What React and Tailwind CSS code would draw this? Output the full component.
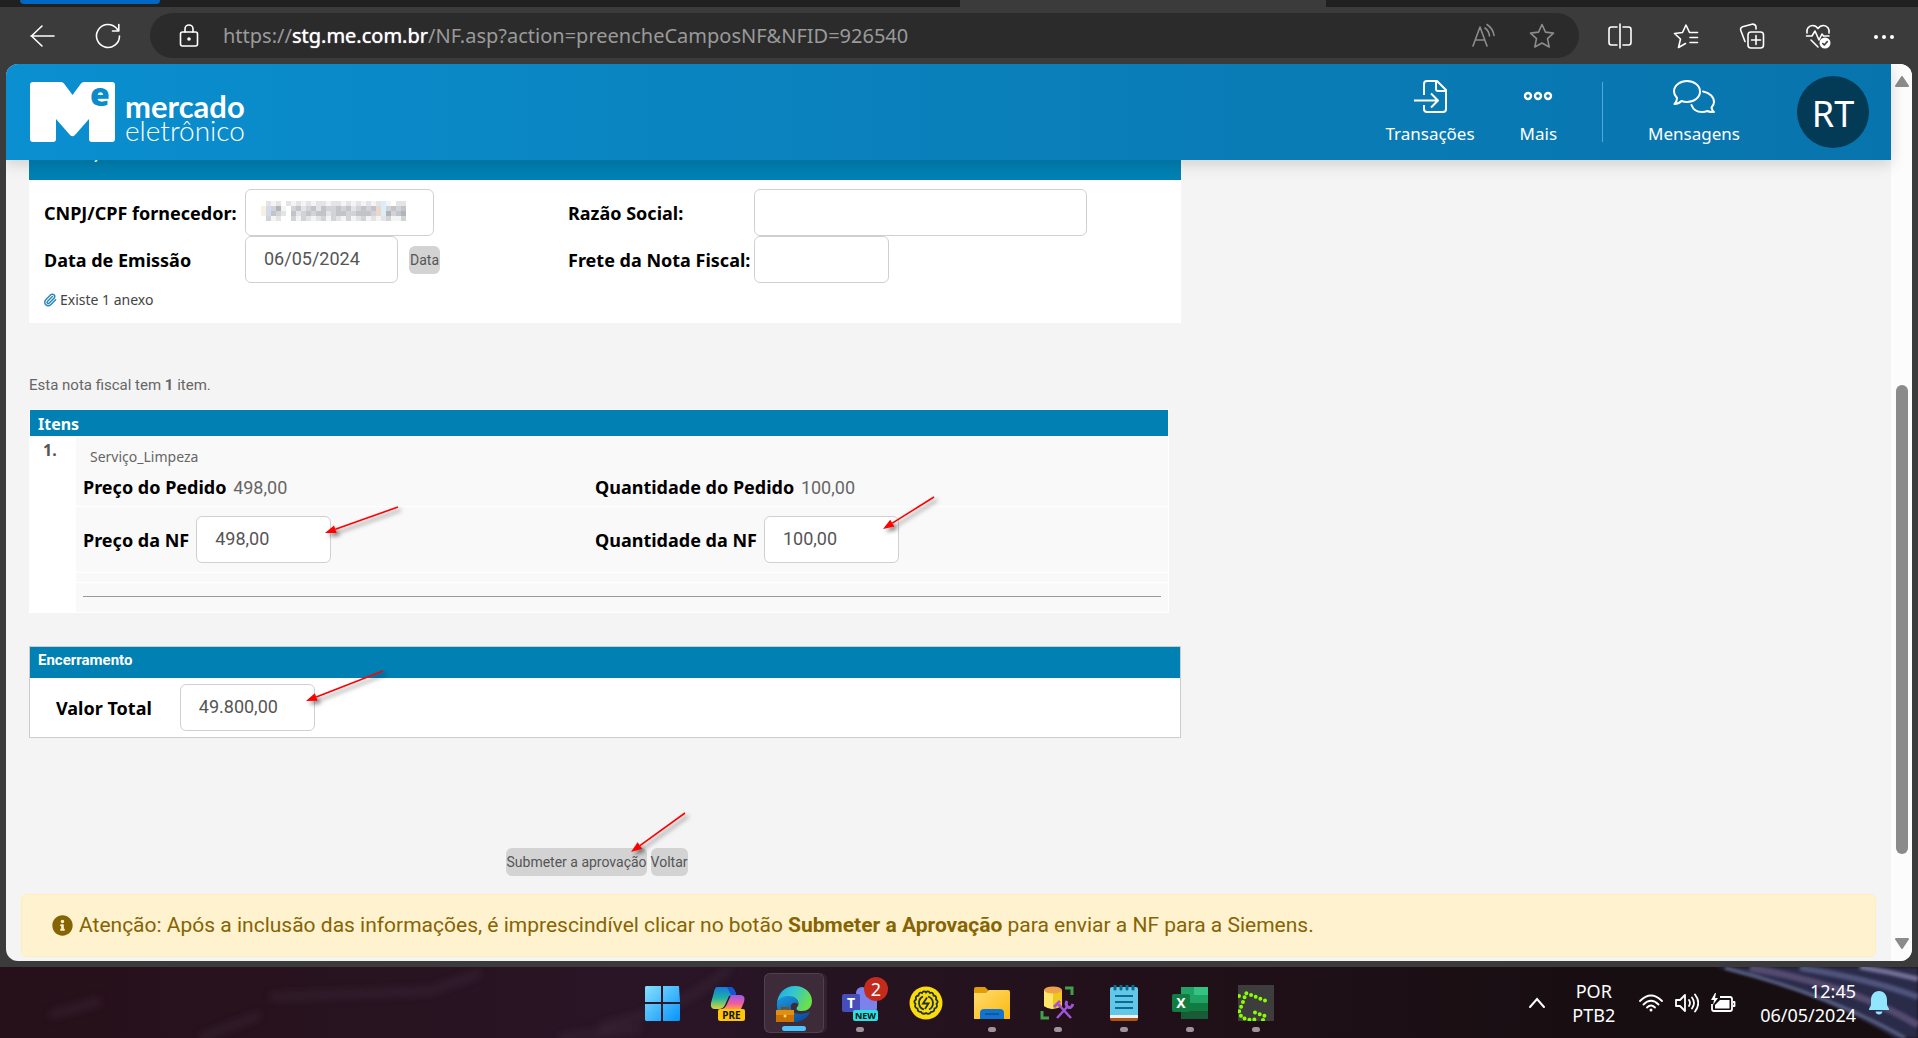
import { FaInfoCircle } from "react-icons/fa";
import { Paperclip } from "lucide-react";

const INPUT = "h-[47px] rounded-md border border-[#d0d0d0] bg-white px-[18px] pb-0.5 font-[Roboto,sans-serif] text-lg text-[#555]";
const LABEL = "font-['Noto_Sans',sans-serif] text-lg leading-5 font-bold text-black";
const BUTTON = "h-7 rounded-md bg-[#d3d3d3] font-[Roboto,sans-serif] text-sm text-[#555]";

// tail at the top right corner, tip at the bottom left corner
function Arrow({ width, height, className }) {
  const len = Math.hypot(width, height);
  const ux = width / len;
  const uy = -height / len;
  const bx = ux * 11;
  const by = height + uy * 11;
  const head = `0,${height} ${bx - uy * 4},${by + ux * 4} ${bx + uy * 4},${by - ux * 4}`;

  return (
    <svg
      width={width}
      height={height}
      aria-hidden="true"
      className={`pointer-events-none absolute z-10 overflow-visible drop-shadow-[3px_3px_2px_rgba(0,0,0,0.5)] ${className}`}
    >
      <line x1={width} y1="0" x2={bx} y2={by} stroke="#fe0000" strokeWidth="1.6" />
      <polygon points={head} fill="#fe0000" />
    </svg>
  );
}

const SHADES = {
  ".": "#ffffff",
  a: "#f4f4f4",
  b: "#e4e4e6",
  c: "#d2d3d7",
  d: "#c2c4c9",
  e: "#b0b4bb",
  p: "#fbeee3",
  s: "#d2dbe9",
  o: "#ecd8ca",
  l: "#dcedf9",
};

const MOSAIC = [
  ".bab.babababbabbababababla.bb",
  "pscea.cdbcdbdccdcdbcdcdolcdcd",
  "psdcb.dbcdcddbcddccdddcolecde",
  ".cab..cacbabcacbacabcabablaac".replace("l", "c"),
];

function Mosaic() {
  return (
    <svg width="145" height="20" viewBox="0 0 29 4" preserveAspectRatio="none" shapeRendering="crispEdges" aria-hidden="true" className="absolute top-3 left-4">
      {MOSAIC.map((row, y) => [...row].map((shade, x) => <rect key={`${x}-${y}`} x={x} y={y} width="1" height="1" fill={SHADES[shade]} />))}
    </svg>
  );
}

function Line({ children, size = 26, className = "" }) {
  return (
    <svg width={size} height={size} viewBox="0 0 26 26" fill="none" stroke="currentColor" strokeWidth="1.6" strokeLinecap="round" strokeLinejoin="round" aria-hidden="true" className={className}>
      {children}
    </svg>
  );
}

function ToolButton({ label, children }) {
  return (
    <button type="button" aria-label={label} className="flex h-11 w-[66px] items-center justify-center text-white">
      {children}
    </button>
  );
}

function BrowserBar() {
  return (
    <div className="font-['Noto_Sans',sans-serif]">
      <div className="flex h-[7px] bg-[#202020]">
        <div className="ml-5 h-1 w-[140px] rounded-b-xl bg-[#0068c4]" />
        <div className="ml-[800px] h-[7px] w-[366px] bg-[#3b3b3b]" />
      </div>
      <div className="flex h-[57px] items-center bg-[#3b3b3b] pr-px pl-[9px]">
        <ToolButton label="Voltar">
          <Line><path d="M25 13H2M13 3 2.500 13 13 23" /></Line>
        </ToolButton>
        <ToolButton label="Atualizar">
          <Line><path d="M24.500 13A11.500 11.500 0 1 1 21.500 5.200L23.500 7.800M23.800 1.500V8H17.500" /></Line>
        </ToolButton>
        <div className="ml-[9px] flex h-[45px] flex-1 items-center rounded-full bg-[#2b2b2b] pr-6 pl-[26px]">
          <Line className="text-white">
            <rect x="4.500" y="9" width="17" height="14" rx="2" />
            <path d="M9 9V6a4 4 0 0 1 8 0v3" />
            <circle cx="13" cy="16" r="1" fill="currentColor" />
          </Line>
          <div className="ml-[21px] flex-1 text-xl text-[#9a9a9a]">
            https://<span className="text-white [text-shadow:0_0_1px_#fff]">stg.me.com.br</span>/NF.asp?action=preencheCamposNF&amp;NFID=926540
          </div>
          <button type="button" aria-label="Ler em voz alta" className="mr-8 text-[#8c8c8c]">
            <Line><path d="M2 23 9 4l7 19M4.500 17h9M14 5q4 3 4.500 8M16 1.500q6 4 7 11" /></Line>
          </button>
          <button type="button" aria-label="Favoritar" className="text-[#8c8c8c]">
            <Line><path d="m13 1.500 3.500 7.600 8 1-6 5.600 1.700 8.300L13 20l-7.200 4 1.700-8.300-6-5.600 8-1z" /></Line>
          </button>
        </div>
        <div className="ml-2 flex">
          <ToolButton label="Dividir tela">
            <Line><path d="M10 4H4.500A2.500 2.500 0 0 0 2 6.500v13A2.500 2.500 0 0 0 4.500 22H10M16 4h5.500A2.500 2.500 0 0 1 24 6.500v13a2.500 2.500 0 0 1-2.500 2.500H16M13 1v24" /></Line>
          </ToolButton>
          <ToolButton label="Favoritos">
            <Line><path d="M24.500 9.500h-8L13 2 9.500 9.500l-8 1 6 5.500-2 8.500 7-4M17 14.500h7.500M17 19.500h7.500" /></Line>
          </ToolButton>
          <ToolButton label="Coleções">
            <Line>
              <rect x="9" y="9" width="15.500" height="16" rx="3" />
              <path d="M17 12.500v9M12.500 17H21.500M6 18.500 1.800 7.500Q1 4.500 3.500 3.700L13 1.200Q16 .8 17 3.500V6" />
            </Line>
          </ToolButton>
          <ToolButton label="Desempenho">
            <Line>
              <path d="M2 10C1 6 4 2.500 7.500 2.500 10 2.500 12 4 13 5.500 14 4 16 2.500 18.500 2.500 22 2.500 25 6 24 10M1.500 13H7l3-5 4 9 3-6 1.500 2H24M6 17l7 7" />
              <circle cx="20" cy="20" r="5.500" fill="currentColor" stroke="none" />
              <path d="m17.800 20.500 1.500 1.500 3-3.500" stroke="#3b3b3b" />
            </Line>
          </ToolButton>
          <ToolButton label="Mais opções">
            <Line><g fill="currentColor" stroke="none"><circle cx="5" cy="14" r="2" /><circle cx="13" cy="14" r="2" /><circle cx="21" cy="14" r="2" /></g></Line>
          </ToolButton>
        </div>
      </div>
    </div>
  );
}

function Logo() {
  return (
    <a href="#inicio" className="flex items-end gap-2.5 text-white" aria-label="mercado eletrônico">
      <svg width="85" height="60" viewBox="0 0 85 60" aria-hidden="true" className="overflow-visible">
        <path d="M3 0H31Q33 0 34 1.500L42.500 13 51 1.500Q52 0 54 0H82a3 3 0 0 1 3 3V57a3 3 0 0 1-3 3H62a3 3 0 0 1-3-3V37L45 53q-2.500 2.500-5 0L26 37V57a3 3 0 0 1-3 3H3a3 3 0 0 1-3-3V3A3 3 0 0 1 3 0Z" fill="#fff" />
        <text x="60" y="24" fontFamily="'Open Sans', sans-serif" fontWeight="800" fontSize="32" fill="#0a8bcb">e</text>
      </svg>
      <span className="flex flex-col font-[Lato,sans-serif] leading-6">
        <span className="text-[31px] leading-6 font-bold">mercado</span>
        <span className="text-[28px] leading-6 font-light">eletrônico</span>
      </span>
    </a>
  );
}

function NavLink({ label, children }) {
  return (
    <a href="#menu" className="flex flex-col items-center gap-2 text-[17px] leading-6 text-white">
      <span className="flex h-9 items-center">{children}</span>
      {label}
    </a>
  );
}

function Header() {
  return (
    <header className="relative z-20 flex h-24 items-center justify-between bg-linear-to-r from-[#0a8fd0] via-[#0a80bb] to-[#0874ad] pr-[22px] pl-6 shadow-[0_4px_14px_rgba(0,0,0,0.15)]">
      <Logo />
      <nav className="flex items-center gap-[45px] font-['Noto_Sans',sans-serif]">
        <NavLink label="Transações">
          <svg width="33" height="33" viewBox="0 0 33 33" fill="none" stroke="currentColor" strokeWidth="2" strokeLinejoin="round" aria-hidden="true">
            <path d="M10 15V4a3 3 0 0 1 3-3H23L32 10V29a3 3 0 0 1-3 3H13a3 3 0 0 1-3-3V25M22 1V9a2 2 0 0 0 2 2H32M0 20.500H24M17 13.500 24 20.500 17 27.500" />
          </svg>
        </NavLink>
        <NavLink label="Mais">
          <svg width="30" height="10" viewBox="0 0 30 10" fill="none" stroke="currentColor" strokeWidth="2.400" aria-hidden="true">
            <circle cx="5" cy="5" r="3" /><circle cx="15" cy="5" r="3" /><circle cx="25" cy="5" r="3" />
          </svg>
        </NavLink>
        <div className="h-[60px] w-px bg-[#55a8d3]" />
        <NavLink label="Mensagens">
          <svg width="42" height="33" viewBox="0 0 42 33" fill="none" stroke="currentColor" strokeWidth="2" strokeLinejoin="round" strokeLinecap="round" aria-hidden="true">
            <path d="M14 1C21 1 27 5.500 27 11.500S21 22 14 22Q11 22 8.500 21 5.500 24 1.500 24 4 21.500 4 18 1 15 1 11.500C1 5.500 7 1 14 1Z" />
            <path d="M30 11.500C36.500 12.500 41 17 41 22Q41 25 38.500 27.500 39 30.500 41 32 37.500 32.500 34.500 31 32 32 29 32 21 32 18.500 25" />
          </svg>
        </NavLink>
        <button type="button" aria-label="Perfil RT" className="ml-3 size-[72px] rounded-full bg-[#033a56] pt-1 text-4xl text-white">RT</button>
      </nav>
    </header>
  );
}

function InvoiceForm() {
  return (
    <section className="bg-white">
      <h2 className="h-5 overflow-hidden bg-[#0080b3] pl-[9px] text-[15px] font-bold text-white"><span className="-mt-4 block leading-5">Informações</span></h2>
      <div className="grid grid-cols-[201px_323px_186px_1fr] items-center pt-[9px] pl-[15px]">
        <label htmlFor="cnpj" className={`${LABEL} whitespace-nowrap`}>CNPJ/CPF fornecedor:</label>
        <div className="relative">
          <input id="cnpj" className={`${INPUT} w-[189px]`} />
          <Mosaic />
        </div>
        <label htmlFor="razao" className={LABEL}>Razão Social:</label>
        <div><input id="razao" className={`${INPUT} w-[333px]`} /></div>
        <label htmlFor="emissao" className={LABEL}>Data de Emissão</label>
        <div className="flex items-center gap-[11px]">
          <input id="emissao" defaultValue="06/05/2024" className={`${INPUT} w-[153px]`} />
          <button type="button" className={`${BUTTON} px-px`}>Data</button>
        </div>
        <label htmlFor="frete" className={`${LABEL} whitespace-nowrap`}>Frete da Nota Fiscal:</label>
        <div><input id="frete" className={`${INPUT} w-[135px]`} /></div>
      </div>
      <a href="#anexos" className="flex items-center gap-[3px] pt-[7px] pb-[13px] pl-3.5 font-['Noto_Sans',sans-serif] text-sm leading-5 text-[#444]">
        <Paperclip size={14} strokeWidth={2.500} className="text-[#2b86bd]" aria-hidden="true" />
        Existe 1 anexo
      </a>
    </section>
  );
}

function Items() {
  return (
    <section className="mt-3.5 max-w-[1140px] border border-white bg-white">
      <h2 className="h-[26px] bg-[#0080b3] pt-0.5 pl-2 font-['Noto_Sans',sans-serif] text-base leading-6 font-bold text-white">Itens</h2>
      <div className="mt-px flex">
        <div className="w-[46px] pt-[3px] pl-[13px] font-['Noto_Sans',sans-serif] text-base leading-5 font-bold text-[#555]">1.</div>
        <div className="flex flex-1 flex-col gap-px">
          <div className="h-[69px] bg-[#f9f9f9] pt-2.5 pl-[7px]">
            <p className="pl-[7px] font-['Noto_Sans',sans-serif] text-sm leading-5 text-[#666]">Serviço_Limpeza</p>
            <div className="mt-2.5 grid grid-cols-[512px_1fr]">
              <p className={LABEL}>Preço do Pedido <span className="ml-0.5 font-[Roboto,sans-serif] text-lg leading-5 font-normal text-[#666]">498,00</span></p>
              <p className={LABEL}>Quantidade do Pedido <span className="ml-0.5 font-[Roboto,sans-serif] text-lg leading-5 font-normal text-[#666]">100,00</span></p>
            </div>
          </div>
          <div className="grid h-[65px] grid-cols-[512px_1fr] items-center bg-[#f9f9f9] pl-[7px]">
            <div className="flex items-center gap-[7px]">
              <label htmlFor="preco" className={LABEL}>Preço da NF</label>
              <div className="relative">
                <input id="preco" defaultValue="498,00" className={`${INPUT} w-[135px]`} />
                <Arrow width={73} height={26} className="-top-[9px] left-[129px]" />
              </div>
            </div>
            <div className="flex items-center gap-[7px]">
              <label htmlFor="quantidade" className={LABEL}>Quantidade da NF</label>
              <div className="relative">
                <input id="quantidade" defaultValue="100,00" className={`${INPUT} w-[135px]`} />
                <Arrow width={51} height={32} className="-top-[19px] left-[119px]" />
              </div>
            </div>
          </div>
          <div className="h-[9px] bg-[#f9f9f9]" />
          <div className="h-[29px] bg-[#f9f9f9] px-[7px] pt-[13px]"><hr className="border-[#999]" /></div>
        </div>
      </div>
    </section>
  );
}

function Closing() {
  return (
    <section className="mt-[33px] border border-[#ccc] bg-white">
      <h2 className="h-[31px] bg-[#0080b3] pt-[3px] pl-2 text-[15px] leading-5 font-bold text-white">Encerramento</h2>
      <div className="flex items-center gap-7 py-1.5 pl-[26px]">
        <label htmlFor="total" className={LABEL}>Valor Total</label>
        <div className="relative">
          <input id="total" defaultValue="49.800,00" className={`${INPUT} w-[135px]`} />
          <Arrow width={77} height={30} className="-top-[13px] left-[126px]" />
        </div>
      </div>
    </section>
  );
}

function Scrollbar() {
  return (
    <div className="flex w-[21px] flex-col items-center bg-[#fcfcfc] py-3">
      <svg width="14" height="11" aria-hidden="true"><path d="M7 1 13 10H1Z" fill="#8b8b8b" stroke="#8b8b8b" strokeWidth="2" strokeLinejoin="round" /></svg>
      <div className="grow-[298]" />
      <div className="w-3 grow-[470] rounded-full bg-[#8b8b8b]" />
      <div className="grow-[84]" />
      <svg width="14" height="11" aria-hidden="true"><path d="M1 1H13L7 10Z" fill="#8b8b8b" stroke="#8b8b8b" strokeWidth="2" strokeLinejoin="round" /></svg>
    </div>
  );
}

function AppIcon({ name, children, dot, active }) {
  return (
    <button type="button" aria-label={name} className={`relative flex h-[60px] w-[60px] flex-col items-center justify-between rounded-md pt-3 pb-px ${active ? "border border-white/10 bg-white/10 shadow-[3px_0_0_rgba(255,255,255,0.06)]" : ""}`}>
      {children}
      {dot && <span className={`h-[5px] rounded-full ${active ? "w-6 bg-[#4cc2ff]" : "w-2 bg-[#9c9498]"}`} />}
    </button>
  );
}

const APP_TEXT = { fontFamily: "'Noto Sans', sans-serif", fontWeight: 700 };

function TaskbarApps() {
  return (
    <div className="flex gap-1.5">
      <AppIcon name="Iniciar">
        <svg width="36" height="36">
          <defs><linearGradient id="win" x2="36" y2="36" gradientUnits="userSpaceOnUse"><stop stopColor="#8ae2ff" /><stop offset="1" stopColor="#0693fb" /></linearGradient></defs>
          <path d="M2 1H17V17H1V2ZM19 1H35L36 17H19ZM1 19H17V36H2L1 35ZM19 19H36V35L35 36H19Z" fill="url(#win)" />
        </svg>
      </AppIcon>
      <AppIcon name="Copilot">
        <svg width="38" height="36" className="overflow-visible">
          <defs>
            <linearGradient id="cpA" x2="0" y2="1"><stop stopColor="#1679dc" /><stop offset=".5" stopColor="#1fb0a5" /><stop offset="1" stopColor="#d9d738" /></linearGradient>
            <linearGradient id="cpB" x2="0" y2="1"><stop stopColor="#9a58f0" /><stop offset=".6" stopColor="#ef5d9b" /><stop offset="1" stopColor="#ff9a52" /></linearGradient>
          </defs>
          <path d="M8 2H21Q25 2 27 9L20 11 16 20Q14 24 10 24H6Q1 24 2 18L5 7Q6 2 8 2Z" fill="url(#cpA)" />
          <path d="M18 2H22Q25 2 27 10H22Z" fill="#1455d5" />
          <path d="M22 10H32Q37 11 35 17L32 24H12Q16 24 18 19Z" fill="url(#cpB)" />
          <rect x="9" y="24" width="27" height="12" rx="2" fill="#ffc60a" />
          <text x="22.500" y="34" fontSize="10" textAnchor="middle" fill="#111" style={APP_TEXT}>PRE</text>
        </svg>
      </AppIcon>
      <AppIcon name="Edge" dot active>
        <svg width="36" height="36">
          <defs>
            <linearGradient id="edA" x2="1" y2=".4"><stop stopColor="#1fa4e8" /><stop offset=".5" stopColor="#35c6cf" /><stop offset="1" stopColor="#69e04c" /></linearGradient>
            <linearGradient id="edB" x2=".6" y2="1"><stop stopColor="#1a9be0" /><stop offset="1" stopColor="#0b4f9c" /></linearGradient>
          </defs>
          <path d="M1 17C2 7 9 0 19 0 29 0 36 7 36 15 36 22 31 25 26 25 21 25 19 23 22 20 24 15 20 11 14 11 7 11 2 14 1 17Z" fill="url(#edA)" />
          <path d="M1 17C3 11 9 10 13 10 19 10 23 14 22 18 16 14 12 21 17 26 21 29 28 28 34 26 31 33 25 36 18 36 7 36 0 28 1 17Z" fill="url(#edB)" />
          <path d="M6 24V22h6v2" fill="none" stroke="#8a4a06" strokeWidth="2" />
          <rect y="24" width="18" height="12" fill="#c87206" /><rect y="24" width="18" height="5" fill="#e08f12" /><circle cx="9" cy="30" r="1.500" fill="#ffd65a" />
        </svg>
      </AppIcon>
      <AppIcon name="Teams" dot>
        <svg width="36" height="36" className="overflow-visible">
          <rect x="14" y="2" width="12" height="12" rx="6" fill="#7b83eb" />
          <path d="M14 12H35V23Q35 29 28 29H14Z" fill="#7b83eb" />
          <rect x="0" y="9" width="18" height="18" rx="2" fill="#464ebc" />
          <text x="9" y="23" fontSize="14" textAnchor="middle" fill="#fff" style={APP_TEXT}>T</text>
          <rect x="11" y="25" width="25" height="11" rx="2" fill="#2be0e0" />
          <text x="23.500" y="34" fontSize="9" textAnchor="middle" fill="#111" style={APP_TEXT}>NEW</text>
        </svg>
        <span className="absolute top-1 right-0.5 flex size-6 items-center justify-center rounded-full bg-[#c42b1c] font-['Noto_Sans',sans-serif] text-lg leading-6 text-white">2</span>
      </AppIcon>
      <AppIcon name="Energia">
        <svg width="36" height="36" fill="none" stroke="#20302c" strokeWidth="1.800">
          <circle cx="18" cy="18" r="16.500" fill="#fbdb0b" stroke="none" />
          <path d="M18 7.500Q20 5 22 8 25 6.500 25.500 10.500 29 11 28 14.500 31 16.500 28.500 19 30 22.500 26.500 23.500 26.500 27 23 27 21 30 18 28 15 30 13 27 9.500 27 9.500 23.500 6 22.500 7.500 19 5 16.500 8 14.500 7 11 10.500 10.500 11 6.500 14 8 16 5 18 7.500Z" />
          <path d="M15 11.500A7 7 0 0 0 16 24.500M21 24.500A7 7 0 0 0 20 11.500M19 12.500 15 18.500H20.500L17 24" />
        </svg>
      </AppIcon>
      <AppIcon name="Explorador de Arquivos" dot>
        <svg width="36" height="36">
          <defs><linearGradient id="fold" x2="1" y2="1"><stop stopColor="#ffdc72" /><stop offset="1" stopColor="#fbb80b" /></linearGradient></defs>
          <path d="M0 4Q0 2 2 2H11L15 6H34V14H0Z" fill="#e09d07" />
          <path d="M0 8H12L15 5H34Q36 5 36 7V34H0Z" fill="url(#fold)" />
          <path d="M6 34V28Q6 24 10 24H26Q30 24 30 28V34Z" fill="#1274cf" /><path d="M11 29H25" stroke="#0a4f96" strokeWidth="1.500" />
        </svg>
      </AppIcon>
      <AppIcon name="Ferramentas" dot>
        <svg width="36" height="36">
          <path d="M4 5V21Q13 27 22 21V5Z" fill="#f2c71b" /><path d="M4 5V21Q8 24 13 24V5Z" fill="#ffe56a" /><ellipse cx="13" cy="5" rx="9" ry="3.500" fill="#eea14d" />
          <path d="M25 3H32V10M2 26V33H9" fill="none" stroke="#41a04a" strokeWidth="3" />
          <path d="M17 33 28 21M31 33 19 20" fill="none" stroke="#a154d8" strokeWidth="2.500" />
          <path d="M14 22 20 16M17 18 20 21M27 16Q25 20 28 22T33 19" fill="none" stroke="#a154d8" strokeWidth="3" />
        </svg>
      </AppIcon>
      <AppIcon name="Bloco de Notas" dot>
        <svg width="36" height="36">
          <path d="M4 30H32V34Q32 36 30 36H6Q4 36 4 34Z" fill="#b45415" /><path d="M4 28H32V33H4Z" fill="#eef0f2" /><path d="M4 4Q4 2 6 2H30Q32 2 32 4V30H4Z" fill="#63c8e8" />
          <path d="M9 11H27M9 17H27M9 23H27" stroke="#0a6b93" strokeWidth="2" />
          <path d="M9 1V4M15 1V4M21 1V4M27 1V4" stroke="#0a6b93" strokeWidth="3" strokeLinecap="round" />
        </svg>
      </AppIcon>
      <AppIcon name="Excel" dot>
        <svg width="36" height="36">
          <path d="M9 2H22V18H9Z" fill="#21a366" /><path d="M22 2H36V10H22Z" fill="#33c481" /><path d="M22 10H36V18H22Z" fill="#21a366" /><path d="M9 18H22V26H9Z" fill="#107c41" /><path d="M22 18H36V26H22Z" fill="#107c41" /><path d="M9 26H36V34H9Z" fill="#185c37" />
          <rect y="9" width="18" height="18" rx="2" fill="#107c41" />
          <text x="9" y="23" fontSize="14" textAnchor="middle" fill="#fff" style={APP_TEXT}>X</text>
        </svg>
      </AppIcon>
      <AppIcon name="Greenshot" dot>
        <svg width="36" height="36">
          <path d="M0 0H36V36H0Z" fill="#3d3d3d" />
          <path d="M27 15.500 8 8 5 17 1 27 4 33 13 35 20 34M17 27.500 27 31 25 35M1 11V16" fill="none" stroke="#8aff00" strokeWidth="4" strokeLinecap="round" strokeDasharray="0 5" />
        </svg>
      </AppIcon>
    </div>
  );
}

function Tray() {
  return (
    <div className="flex flex-1 items-center justify-end font-['Noto_Sans',sans-serif] text-lg leading-6 text-white">
      <svg width="18" height="12" fill="none" stroke="currentColor" strokeWidth="2" strokeLinecap="round" aria-hidden="true"><path d="m2 10 7-8 7 8" /></svg>
      <div className="ml-[26px] text-center">POR<br />PTB2</div>
      <div className="ml-6 flex items-center gap-3">
        <svg width="24" height="20" fill="none" stroke="currentColor" strokeWidth="1.800" strokeLinecap="round" aria-hidden="true">
          <path d="M1 8Q12-3 23 8M4.500 11.500Q12 4 19.500 11.500M8 14.500Q12 10.500 16 14.500" /><circle cx="12" cy="17" r="1.500" fill="currentColor" stroke="none" />
        </svg>
        <svg width="24" height="20" fill="none" stroke="currentColor" strokeWidth="1.800" strokeLinecap="round" strokeLinejoin="round" aria-hidden="true">
          <path d="M1 7H5L10 2V18L5 13H1ZM14 7Q16 10 14 13M17 4.500Q21 10 17 15.500M20 1.500Q26.500 10 20 18.500" />
        </svg>
        <svg width="25" height="20" fill="none" stroke="currentColor" strokeWidth="1.800" strokeLinejoin="round" aria-hidden="true">
          <path d="M9 4H19Q21 4 21 6V16Q21 18 19 18H3Q1 18 1 16V11M22 9H23.500V13H22" /><path d="M9 7H18.500V15.500H4V12Z" fill="currentColor" stroke="none" /><path d="M4 0 0 7H3L2 12 7 5H4L5 0Z" fill="currentColor" stroke="none" />
        </svg>
      </div>
      <div className="ml-6 text-right">12:45<br />06/05/2024</div>
      <svg width="22" height="24" className="ml-3" fill="#92e5ff" aria-hidden="true"><path d="M11 0C6 0 3 4 3 9V14L1 18V19H21V18L19 14V9C19 4 16 0 11 0ZM7.500 20.500H14.500Q14 23.500 11 23.500T7.500 20.500Z" /></svg>
    </div>
  );
}

function Wallpaper() {
  return (
    <svg viewBox="0 0 1918 71" preserveAspectRatio="none" aria-hidden="true" className="absolute inset-0 size-full">
      <defs>
        <linearGradient id="night"><stop stopColor="#261019" /><stop offset=".35" stopColor="#291526" /><stop offset=".6" stopColor="#211019" /><stop offset=".85" stopColor="#170e11" /></linearGradient>
        <filter id="soft" x="-20%" y="-80%" width="140%" height="260%"><feGaussianBlur stdDeviation="4" /></filter>
        <filter id="softer" x="-20%" y="-80%" width="140%" height="260%"><feGaussianBlur stdDeviation="1.500" /></filter>
      </defs>
      <path d="M0 0H1918V71H0Z" fill="url(#night)" />
      <g filter="url(#soft)" fill="none" stroke="#453044" strokeWidth="5" opacity=".6">
        <path d="M50 48 100 34M270 30 430 24 480 6M200 71 260 48M600 60Q690 40 730 0M560 71 640 62" />
      </g>
      <path d="M1715 0H1918V71H1895C1840 38 1780 14 1715 0Z" fill="#2c2948" filter="url(#softer)" />
      <g filter="url(#softer)" fill="none">
        <path d="M1725 1Q1830 28 1905 71" stroke="#5f6688" strokeWidth="3" />
        <path d="M1750 1Q1850 18 1918 58" stroke="#554c70" strokeWidth="7" />
        <path d="M1800 1Q1870 12 1918 30" stroke="#50557c" strokeWidth="6" />
        <path d="M1860 0Q1890 5 1918 12" stroke="#747098" strokeWidth="5" />
      </g>
    </svg>
  );
}

export default function App() {
  return (
    <div className="flex min-h-screen flex-col bg-[#3b3b3b] font-[Roboto,sans-serif]">
      <BrowserBar />
      <div className="mr-1.5 mb-1.5 ml-1.5 flex flex-1 overflow-hidden rounded-xl bg-[#f4f4f4]">
        <div className="flex-1">
          <Header />
          <main className="px-[15px]">
            <div className="ml-2 max-w-[1152px]">
              <InvoiceForm />
              <p className="mt-[52px] text-[15px] leading-5 text-[#666]">Esta nota fiscal tem <b>1</b> item.</p>
              <Items />
              <Closing />
              <div className="mt-[110px] flex max-w-[1136px] justify-center gap-1">
                <div className="relative flex">
                  <button type="button" className={BUTTON}>Submeter a aprovação</button>
                  <Arrow width={54} height={39} className="-top-[35px] left-[125px]" />
                </div>
                <button type="button" className={BUTTON}>Voltar</button>
              </div>
            </div>
            <div role="alert" className="mt-[18px] flex h-[63px] items-center gap-1.5 rounded-md border border-[#ffeeba] bg-[#fff2cf] pl-[30px] text-[21px] text-[#856404]">
              <FaInfoCircle aria-hidden="true" />
              <p>Atenção: Após a inclusão das informações, é imprescindível clicar no botão <b>Submeter a Aprovação</b> para enviar a NF para a Siemens.</p>
            </div>
          </main>
        </div>
        <Scrollbar />
      </div>
      <footer className="relative h-[71px] overflow-hidden bg-[#1c1013]">
        <Wallpaper />
        <div className="relative flex h-full items-center px-7">
          <div className="flex-1" />
          <TaskbarApps />
          <Tray />
        </div>
      </footer>
    </div>
  );
}
